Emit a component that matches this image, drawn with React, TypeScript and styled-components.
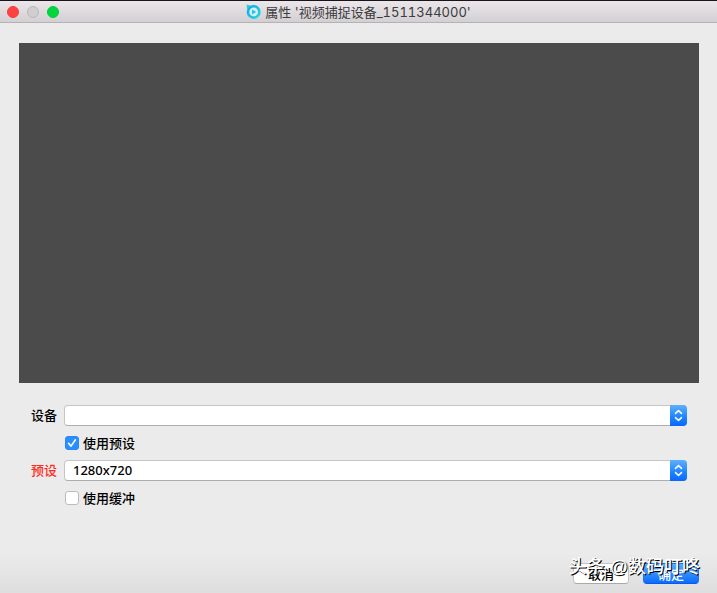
import React, { useState } from "react";
import styled, { createGlobalStyle } from "styled-components";

const GlobalStyle = createGlobalStyle`
  *, *::before, *::after { box-sizing: border-box; }
  body {
    margin: 0;
    background: #ebebeb;
    color: #000;
    font: 13px/20px "Noto Sans", "Noto Sans CJK SC", sans-serif;
  }
`;

const Window = styled.div`
  position: relative;
  display: flex;
  flex-direction: column;
  min-height: 100vh;
  background: linear-gradient(to top, #dedede, #ebebeb 40px);
`;

const TitleBar = styled.header`
  display: flex;
  align-items: center;
  height: 23px;
  padding: 0 7px;
  border-top: 1px solid #1a1418;
  border-bottom: 1px solid #b4b2b4;
  background: linear-gradient(#eae6ea, #d3d0d3);
`;

const Lights = styled.div`
  display: flex;
  flex: 1;
  gap: 8px;
`;

const Light = styled.button<{ $fill: string; $edge: string }>`
  width: 12px;
  height: 12px;
  padding: 0;
  border: 1px solid ${(p) => p.$edge};
  border-radius: 50%;
  background: ${(p) => p.$fill};
`;

const Title = styled.h1`
  display: flex;
  align-items: center;
  gap: 4px;
  margin: 0;
  color: #3c3a3c;
  font: 13px/20px "Inter", "Noto Sans CJK SC", sans-serif;
  font-variant-numeric: tabular-nums;
  white-space: pre;
`;

const Spacer = styled.div`
  flex: 1;
`;

const Preview = styled.section`
  height: 340px;
  margin: 20px 18px 0 19px;
  background: #4b4b4b;
`;

const Form = styled.form`
  display: flex;
  flex: 1;
  flex-direction: column;
  margin-top: 22px;
`;

const Fields = styled.div`
  display: grid;
  grid-template-columns: 27px 1fr;
  column-gap: 7px;
  row-gap: 7px;
  padding: 0 30px;
`;

const FieldLabel = styled.label<{ $alert?: boolean }>`
  color: ${(p) => (p.$alert ? "#ff2a1c" : "#000")};
  font-weight: 500;
  text-align: right;
  white-space: nowrap;
`;

const SelectBox = styled.div`
  display: flex;
  height: 21px;
  border: 1px solid #c6c6c6;
  border-bottom-color: #adadad;
  border-radius: 4px;
  background: #fff;
`;

const Select = styled.select`
  flex: 1;
  min-width: 0;
  padding: 0 8px;
  border: 0;
  appearance: none;
  outline: none;
  background: transparent;
  color: #000;
  font: 500 13px/19px "Noto Sans", "Noto Sans CJK SC", sans-serif;
`;

const Stepper = styled.span`
  display: flex;
  align-items: center;
  justify-content: center;
  width: 17px;
  margin: -1px;
  border-radius: 0 4px 4px 0;
  background: linear-gradient(#5fb0fb, #1c83fe 60%, #0a66ff);
  pointer-events: none;
`;

const CheckRow = styled.label`
  display: flex;
  grid-column: 2;
  align-items: center;
  gap: 4px;
  height: 20px;
  padding-left: 1px;
  font-weight: 500;
`;

const CheckFrame = styled.span`
  display: grid;
  width: 14px;
  height: 14px;

  & > * {
    grid-area: 1 / 1;
  }
`;

const Check = styled.input`
  width: 14px;
  height: 14px;
  margin: 0;
  border: 1px solid #bcbcbc;
  border-radius: 3px;
  appearance: none;
  background: #fff;

  &:checked {
    border-color: #2389fb;
    background: #2a8ffc;
  }
  & + svg {
    visibility: hidden;
    pointer-events: none;
  }
  &:checked + svg {
    visibility: visible;
  }
`;

const Actions = styled.footer`
  display: flex;
  justify-content: flex-end;
  gap: 14px;
  margin-top: auto;
  padding: 0 18px 9px;
`;

const Button = styled.button<{ $primary?: boolean }>`
  width: 56px;
  height: 21px;
  padding: 0;
  border: 1px solid ${(p) => (p.$primary ? "#1474f5" : "#c4c4c4")};
  border-bottom-color: ${(p) => (p.$primary ? "#075be8" : "#a9a9a9")};
  border-radius: 4px;
  background: ${(p) => (p.$primary ? "linear-gradient(#5aacfb, #0a6cff)" : "#fff")};
  color: ${(p) => (p.$primary ? "#fff" : "#000")};
  font: 500 13px/19px "Noto Sans CJK SC", sans-serif;
`;

const Watermark = styled.div`
  position: absolute;
  right: 17px;
  bottom: 12px;
  color: #fff;
  font: 500 18px/28px "Liberation Sans", "Noto Sans CJK SC", sans-serif;
  text-shadow: 1px 1px 0 #000;
  white-space: nowrap;
  pointer-events: none;
`;

const AppLogo = () => (
  <svg width="15" height="15" viewBox="0 0 15 15" aria-hidden="true">
    <defs>
      <linearGradient id="ring" x1="0" y1="0" x2="1" y2="1">
        <stop offset="0" stopColor="#14a4f4" />
        <stop offset="1" stopColor="#20d8dc" />
      </linearGradient>
    </defs>
    <path d="M0.6 0.5 4.5 1.4 1.1 5.4Z" fill="#20d8b8" />
    <circle cx="7.7" cy="7.9" r="5.7" fill="#d4eef6" stroke="url(#ring)" strokeWidth="2.6" />
    <path d="M6 5.4 10.2 7.9 6 10.4Z" fill="#26c4ea" />
  </svg>
);

const Arrows = () => (
  <svg width="9" height="13" viewBox="0 0 9 13" fill="none" stroke="#fff" strokeWidth="1.5" strokeLinecap="round" strokeLinejoin="round" aria-hidden="true">
    <path d="M1.5 4.4 4.5 1.6 7.5 4.4M1.5 8.6 4.5 11.4 7.5 8.6" />
  </svg>
);

const Tick = () => (
  <svg width="14" height="14" viewBox="0 0 14 14" fill="none" stroke="#fff" strokeWidth="1.6" strokeLinecap="round" strokeLinejoin="round" aria-hidden="true">
    <path d="M3.6 7.4 6 10.1 10.4 3.8" />
  </svg>
);

function Dropdown({ id, options }: { id: string; options: string[] }) {
  return (
    <SelectBox>
      <Select id={id}>
        {options.map((o) => (
          <option key={o}>{o}</option>
        ))}
      </Select>
      <Stepper>
        <Arrows />
      </Stepper>
    </SelectBox>
  );
}

function CheckField({ text, initial }: { text: string; initial: boolean }) {
  const [on, setOn] = useState(initial);
  return (
    <CheckRow>
      <CheckFrame>
        <Check type="checkbox" checked={on} onChange={() => setOn(!on)} />
        <Tick />
      </CheckFrame>
      {text}
    </CheckRow>
  );
}

export default function App() {
  return (
    <>
      <GlobalStyle />
      <Window>
        <TitleBar>
          <Lights>
            <Light $fill="#ff4242" $edge="#f23c3e" aria-label="关闭" />
            <Light $fill="#d0ced0" $edge="#b9b7b9" aria-label="最小化" />
            <Light $fill="#00d73f" $edge="#08c83c" aria-label="缩放" />
          </Lights>
          <Title>
            <AppLogo />
            属性 '视频捕捉设备_1511344000'
          </Title>
          <Spacer />
        </TitleBar>
        <Preview />
        <Form onSubmit={(e) => e.preventDefault()}>
          <Fields>
            <FieldLabel htmlFor="device">设备</FieldLabel>
            <Dropdown id="device" options={[""]} />
            <CheckField text="使用预设" initial />
            <FieldLabel htmlFor="preset" $alert>预设</FieldLabel>
            <Dropdown id="preset" options={["1280x720"]} />
            <CheckField text="使用缓冲" initial={false} />
          </Fields>
          <Actions>
            <Button type="button">取消</Button>
            <Button type="submit" $primary>确定</Button>
          </Actions>
        </Form>
        <Watermark>头条 @数码叮咚</Watermark>
      </Window>
    </>
  );
}
